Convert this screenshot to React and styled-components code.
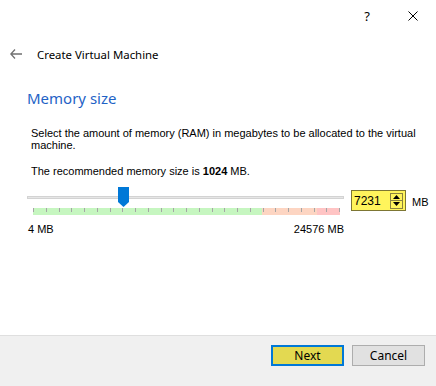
import React from 'react'
import styled, { createGlobalStyle } from 'styled-components'

const GlobalStyle = createGlobalStyle`
  html, body {
    margin: 0;
    padding: 0;
    background: #fff;
  }
  body {
    font-family: 'Liberation Sans', Arial, sans-serif;
  }
`

const MIN = 4
const MAX = 24576
const VALUE = 7231
const TICKS = 25

function App() {
  const fraction = (VALUE - MIN) / (MAX - MIN)

  return (
    <>
      <GlobalStyle />
      <Window>
        <TitleBar>
          <CaptionButton>?</CaptionButton>
          <CaptionButton>
            <svg width='10' height='10' viewBox='0 0 10 10'>
              <path d='M0.5 0.5 L9.5 9.5 M9.5 0.5 L0.5 9.5' stroke='#000' strokeWidth='1' />
            </svg>
          </CaptionButton>
        </TitleBar>

        <Header>
          <BackArrow>
            <svg width='12' height='10' viewBox='0 0 12 10'>
              <path d='M5 0.5 L0.8 5 L5 9.5 M0.8 5 H12' stroke='#707070' strokeWidth='1.3' fill='none' />
            </svg>
          </BackArrow>
          <HeaderTitle>Create Virtual Machine</HeaderTitle>
        </Header>

        <Content>
          <Heading>Memory size</Heading>
          <Text>
            Select the amount of memory (RAM) in megabytes to be allocated to the virtual machine.
          </Text>
          <Text $gap>
            The recommended memory size is <b>1024</b> MB.
          </Text>

          <SliderRow>
            <Slider>
              <Track>
                <Groove />
                <Handle style={{ left: `${fraction * (316 - 11)}px` }}>
                  <svg width='11' height='20' viewBox='0 0 11 20'>
                    <polygon points='0,0 11,0 11,15 5.5,20 0,15' fill='#0078d7' />
                  </svg>
                </Handle>
              </Track>
              <Band>
                <Zone $color='#c6f6c0' $grow={229} />
                <Zone $color='#fdd5c2' $grow={55} />
                <Zone $color='#ffc4c4' $grow={23} />
                <Ticks>
                  {Array.from({ length: TICKS }).map((_, i) => (
                    <Tick key={i} />
                  ))}
                </Ticks>
              </Band>
              <Scale>
                <span>4 MB</span>
                <span>24576 MB</span>
              </Scale>
            </Slider>

            <SpinBox>
              <SpinValue>7231</SpinValue>
              <SpinButtons>
                <SpinArrow>
                  <svg width='7' height='4' viewBox='0 0 7 4'>
                    <polygon points='3.5,0 7,4 0,4' fill='#000' />
                  </svg>
                </SpinArrow>
                <SpinArrow $bottom>
                  <svg width='7' height='4' viewBox='0 0 7 4'>
                    <polygon points='0,0 7,0 3.5,4' fill='#000' />
                  </svg>
                </SpinArrow>
              </SpinButtons>
            </SpinBox>
            <Unit>MB</Unit>
          </SliderRow>
        </Content>

        <Footer>
          <DialogButton $primary>Next</DialogButton>
          <DialogButton>Cancel</DialogButton>
        </Footer>
      </Window>
    </>
  )
}

export default App

const Window = styled.div`
  width: 436px;
  height: 386px;
  display: flex;
  flex-direction: column;
  background: #fff;
  overflow: hidden;
`

const TitleBar = styled.div`
  height: 31px;
  display: flex;
  justify-content: flex-end;
  align-items: center;
`

const CaptionButton = styled.div`
  width: 46px;
  height: 31px;
  display: flex;
  align-items: center;
  justify-content: center;
  font-family: 'Noto Sans', sans-serif;
  font-size: 13px;
  color: #000;
`

const Header = styled.div`
  height: 46px;
  display: flex;
  align-items: center;
  padding-left: 10px;
  gap: 15px;
`

const BackArrow = styled.div`
  display: flex;
  align-items: center;
`

const HeaderTitle = styled.div`
  font-family: 'Noto Sans', sans-serif;
  font-size: 11.4px;
  color: #000;
`

const Content = styled.div`
  padding-left: 27px;
  display: flex;
  flex-direction: column;
`

const Heading = styled.div`
  margin-top: 10px;
  font-family: 'Noto Sans', sans-serif;
  font-size: 15px;
  line-height: 22px;
  color: #1f63c6;
`

const Text = styled.div`
  margin-top: ${(p) => (p.$gap ? '14px' : '18px')};
  padding-left: 4px;
  width: 395px;
  font-size: 11px;
  line-height: 12px;
  color: #000;
`

const SliderRow = styled.div`
  margin-top: 10px;
  display: flex;
  align-items: flex-start;
`

const Slider = styled.div`
  margin-left: 1px;
  width: 316px;
  display: flex;
  flex-direction: column;
`

const Track = styled.div`
  position: relative;
  height: 20px;
  display: flex;
  align-items: center;
`

const Groove = styled.div`
  width: 100%;
  height: 1px;
  background: #e6e6e6;
  border: 1px solid #d3d3d3;
  box-sizing: content-box;
  margin-left: -1px;
`

const Handle = styled.div`
  position: absolute;
  top: 0;
  width: 11px;
  height: 20px;
  display: flex;
`

const Band = styled.div`
  position: relative;
  margin: 1px 4px 0 5px;
  height: 7px;
  display: flex;
`

const Zone = styled.div`
  flex: ${(p) => p.$grow} 0 0;
  background: ${(p) => p.$color};
`

const Ticks = styled.div`
  position: absolute;
  inset: 0;
  display: flex;
  justify-content: space-between;
`

const Tick = styled.div`
  width: 1px;
  height: 4px;
  background: #a5a5a5;
`

const Scale = styled.div`
  margin-top: 8px;
  display: flex;
  justify-content: space-between;
  font-size: 11px;
  line-height: 12px;
  color: #000;
`

const SpinBox = styled.div`
  margin: 3px 0 0 7px;
  width: 55px;
  height: 21px;
  box-sizing: border-box;
  border: 1px solid #7d7634;
  background: #fff45c;
  display: flex;
  align-items: center;
  justify-content: space-between;
  padding: 0 2px 0 2px;
`

const SpinValue = styled.div`
  font-size: 12px;
  color: #000;
`

const SpinButtons = styled.div`
  width: 13px;
  height: 16px;
  box-sizing: border-box;
  border: 1px solid #8a8240;
  display: flex;
  flex-direction: column;
`

const SpinArrow = styled.div`
  flex: 1;
  display: flex;
  align-items: center;
  justify-content: center;
  border-top: ${(p) => (p.$bottom ? '1px solid #8a8240' : 'none')};
`

const Unit = styled.div`
  margin: 9px 0 0 6px;
  font-size: 11px;
  line-height: 12px;
  color: #000;
`

const Footer = styled.div`
  margin-top: auto;
  height: 41px;
  border-top: 1px solid #dfdfdf;
  background: #f0f0f0;
  display: flex;
  justify-content: flex-end;
  align-items: flex-start;
  gap: 8px;
  padding: 9px 11px 0 0;
  box-sizing: content-box;
`

const DialogButton = styled.div`
  width: 73px;
  height: 21px;
  box-sizing: border-box;
  display: flex;
  align-items: center;
  justify-content: center;
  font-family: 'Noto Sans', sans-serif;
  font-size: 12px;
  color: #000;
  background: ${(p) => (p.$primary ? '#e3d951' : '#e1e1e1')};
  border: ${(p) => (p.$primary ? '2px solid #0078d7' : '1px solid #adadad')};
`
